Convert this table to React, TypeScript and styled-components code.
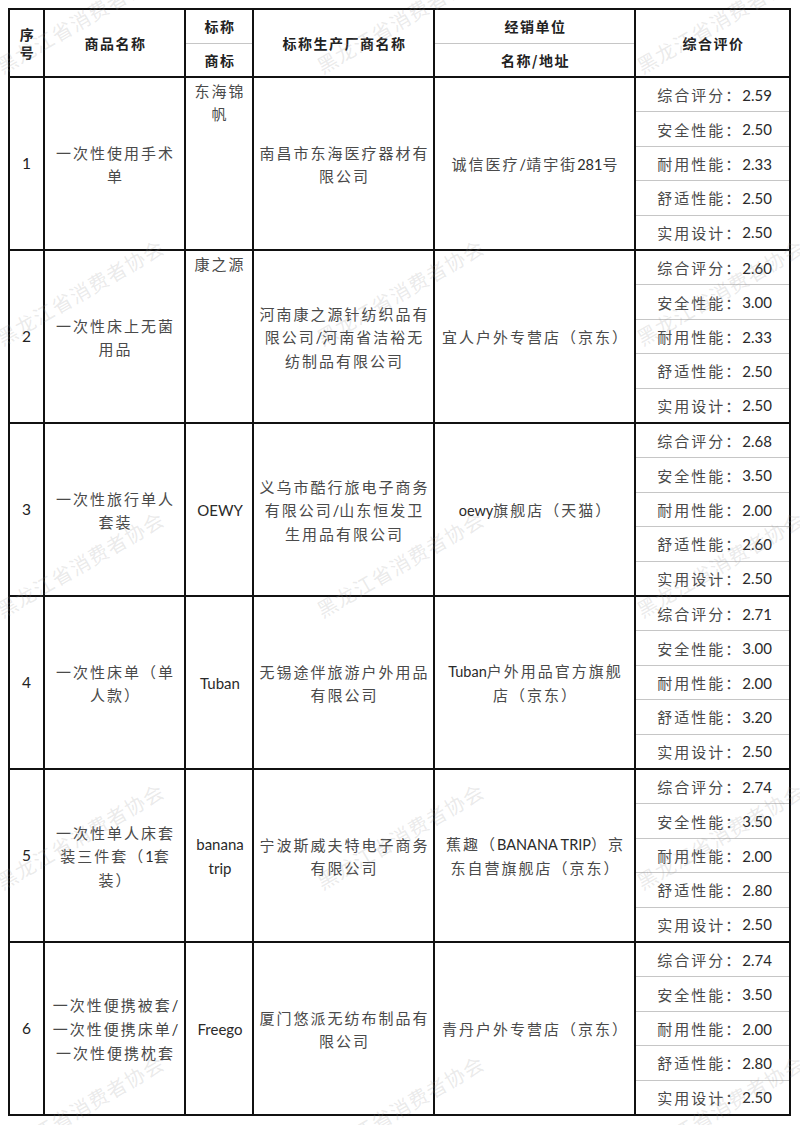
import React from "react";
import styled, { createGlobalStyle } from "styled-components";

const GlobalStyle = createGlobalStyle`
  html, body {
    margin: 0;
    padding: 0;
    background: #ffffff;
  }
  body {
    font-family: "Noto Sans CJK SC", sans-serif;
  }
`;

// column widths include each cell's 2px right border
const COLS = "35px 141px 68px 181px 201px 155px";

type Product = {
  no: string;
  name: string[];
  brand: string[];
  brandTop?: boolean;
  maker: string[];
  seller: string[];
  scores: string[];
};

const SCORE_LABELS = ["综合评分", "安全性能", "耐用性能", "舒适性能", "实用设计"];

const products: Product[] = [
  {
    no: "1",
    name: ["一次性使用手术", "单"],
    brand: ["东海锦", "帆"],
    brandTop: true,
    maker: ["南昌市东海医疗器材有", "限公司"],
    seller: ["诚信医疗/靖宇街281号"],
    scores: ["2.59", "2.50", "2.33", "2.50", "2.50"],
  },
  {
    no: "2",
    name: ["一次性床上无菌", "用品"],
    brand: ["康之源"],
    brandTop: true,
    maker: ["河南康之源针纺织品有", "限公司/河南省洁裕无", "纺制品有限公司"],
    seller: ["宜人户外专营店（京东）"],
    scores: ["2.60", "3.00", "2.33", "2.50", "2.50"],
  },
  {
    no: "3",
    name: ["一次性旅行单人", "套装"],
    brand: ["OEWY"],
    maker: ["义乌市酷行旅电子商务", "有限公司/山东恒发卫", "生用品有限公司"],
    seller: ["oewy旗舰店（天猫）"],
    scores: ["2.68", "3.50", "2.00", "2.60", "2.50"],
  },
  {
    no: "4",
    name: ["一次性床单（单", "人款）"],
    brand: ["Tuban"],
    maker: ["无锡途伴旅游户外用品", "有限公司"],
    seller: ["Tuban户外用品官方旗舰", "店（京东）"],
    scores: ["2.71", "3.00", "2.00", "3.20", "2.50"],
  },
  {
    no: "5",
    name: ["一次性单人床套", "装三件套（1套", "装）"],
    brand: ["banana", "trip"],
    maker: ["宁波斯威夫特电子商务", "有限公司"],
    seller: ["蕉趣（BANANA TRIP）京", "东自营旗舰店（京东）"],
    scores: ["2.74", "3.50", "2.00", "2.80", "2.50"],
  },
  {
    no: "6",
    name: ["一次性便携被套/", "一次性便携床单/", "一次性便携枕套"],
    brand: ["Freego"],
    maker: ["厦门悠派无纺布制品有", "限公司"],
    seller: ["青丹户外专营店（京东）"],
    scores: ["2.74", "3.50", "2.00", "2.80", "2.50"],
  },
];

const WATERMARK_X = [80, 400, 720];
const WATERMARK_Y = [20, 292, 564, 836, 1108];

const Page = styled.div`
  position: relative;
  width: 800px;
  height: 1125px;
  padding: 8px 0 0 8px;
  box-sizing: border-box;
  overflow: hidden;
  background: #fff;
`;

const Sheet = styled.div`
  width: 783px;
  border-top: 2px solid #111;
  border-left: 2px solid #111;
  box-sizing: border-box;
`;

const Row = styled.div<{ $h: number }>`
  display: grid;
  grid-template-columns: ${COLS};
  height: ${(p) => p.$h}px;
`;

const Cell = styled.div<{ $top?: boolean }>`
  display: flex;
  flex-direction: column;
  align-items: center;
  justify-content: ${(p) => (p.$top ? "flex-start" : "center")};
  padding-top: ${(p) => (p.$top ? "1px" : "0")};
  padding-left: 2px;
  border-right: 2px solid #111;
  border-bottom: 2px solid #111;
  box-sizing: border-box;
  text-align: center;
  font-size: 15px;
  line-height: 23px;
  letter-spacing: 2px;
  color: #4a4a4a;
  overflow: hidden;
`;

const HeadCell = styled(Cell)`
  font-size: 14px;
  font-weight: 700;
  letter-spacing: 1.5px;
  line-height: 18px;
  color: #222;
`;

const SplitCell = styled.div`
  display: flex;
  flex-direction: column;
  border-right: 2px solid #111;
  border-bottom: 2px solid #111;
  box-sizing: border-box;
`;

const SplitHalf = styled.div`
  flex: 1;
  display: flex;
  align-items: center;
  justify-content: center;
  padding-left: 2px;
  font-size: 14px;
  font-weight: 700;
  letter-spacing: 1.5px;
  color: #222;

  & + & {
    border-top: 1px solid #c6c6c6;
  }
`;

const NumberCell = styled(Cell)`
  font-family: Lato, "Noto Sans CJK SC", sans-serif;
  font-size: 15.5px;
  letter-spacing: 0;
  padding-left: 0;
  color: #222;
`;

const Line = styled.span`
  display: block;
  white-space: nowrap;
`;

const Latin = styled.span`
  font-family: Lato, "Liberation Sans", sans-serif;
  font-size: 14.5px;
  letter-spacing: 0;
  color: #2a2a2a;
`;

const BrandLatin = styled(Latin)`
  font-size: 15px;
`;

const ScoreCol = styled.div`
  display: flex;
  flex-direction: column;
  border-right: 2px solid #111;
  border-bottom: 2px solid #111;
  box-sizing: border-box;
`;

const ScoreItem = styled.div`
  flex: 1;
  display: flex;
  align-items: center;
  justify-content: center;
  padding-left: 4px;
  font-size: 15px;
  letter-spacing: 2px;
  color: #4a4a4a;
  white-space: nowrap;

  & + & {
    border-top: 1px solid #c6c6c6;
  }
`;

const ScoreValue = styled.span`
  font-family: Lato, "Liberation Sans", sans-serif;
  font-size: 15px;
  letter-spacing: 0;
  color: #2a2a2a;
`;

// faint diagonal stamp lying over the table, clipped by the page edge like the scan
const Watermark = styled.span<{ $x: number; $y: number }>`
  position: absolute;
  left: ${(p) => p.$x}px;
  top: ${(p) => p.$y}px;
  transform: translate(-50%, -50%) rotate(-30deg);
  font-size: 20px;
  letter-spacing: 1px;
  color: rgba(150, 150, 150, 0.2);
  white-space: nowrap;
  pointer-events: none;
  user-select: none;
`;

// wrap latin/digit runs so they keep their own font and no CJK spacing
const mixed = (text: string) =>
  text.split(/([A-Za-z0-9./ ]+)/).map((part, i) =>
    /^[A-Za-z0-9./ ]+$/.test(part) ? <Latin key={i}>{part}</Latin> : part
  );

const Lines = ({ lines }: { lines: string[] }) => (
  <>
    {lines.map((l, i) => (
      <Line key={i}>{mixed(l)}</Line>
    ))}
  </>
);

const Brand = ({ lines }: { lines: string[] }) => (
  <>
    {lines.map((l, i) => (
      <Line key={i}>
        {/^[A-Za-z ]+$/.test(l) ? <BrandLatin>{l}</BrandLatin> : l}
      </Line>
    ))}
  </>
);

const ProductRow = ({ p }: { p: Product }) => (
  <Row $h={173}>
    <NumberCell>{p.no}</NumberCell>
    <Cell>
      <Lines lines={p.name} />
    </Cell>
    <Cell $top={p.brandTop}>
      <Brand lines={p.brand} />
    </Cell>
    <Cell>
      <Lines lines={p.maker} />
    </Cell>
    <Cell>
      <Lines lines={p.seller} />
    </Cell>
    <ScoreCol>
      {p.scores.map((s, i) => (
        <ScoreItem key={i}>
          {SCORE_LABELS[i]}：<ScoreValue>{s}</ScoreValue>
        </ScoreItem>
      ))}
    </ScoreCol>
  </Row>
);

export default function App() {
  return (
    <Page>
      <GlobalStyle />
      <Sheet>
        <Row $h={68}>
          <HeadCell>
            <Line>序</Line>
            <Line>号</Line>
          </HeadCell>
          <HeadCell>商品名称</HeadCell>
          <SplitCell>
            <SplitHalf>标称</SplitHalf>
            <SplitHalf>商标</SplitHalf>
          </SplitCell>
          <HeadCell>标称生产厂商名称</HeadCell>
          <SplitCell>
            <SplitHalf>经销单位</SplitHalf>
            <SplitHalf>名称/地址</SplitHalf>
          </SplitCell>
          <HeadCell>综合评价</HeadCell>
        </Row>
        {products.map((p) => (
          <ProductRow key={p.no} p={p} />
        ))}
      </Sheet>
      {WATERMARK_Y.map((y) =>
        WATERMARK_X.map((x) => (
          <Watermark key={`${x}-${y}`} $x={x} $y={y}>
            黑龙江省消费者协会
          </Watermark>
        ))
      )}
    </Page>
  );
}
